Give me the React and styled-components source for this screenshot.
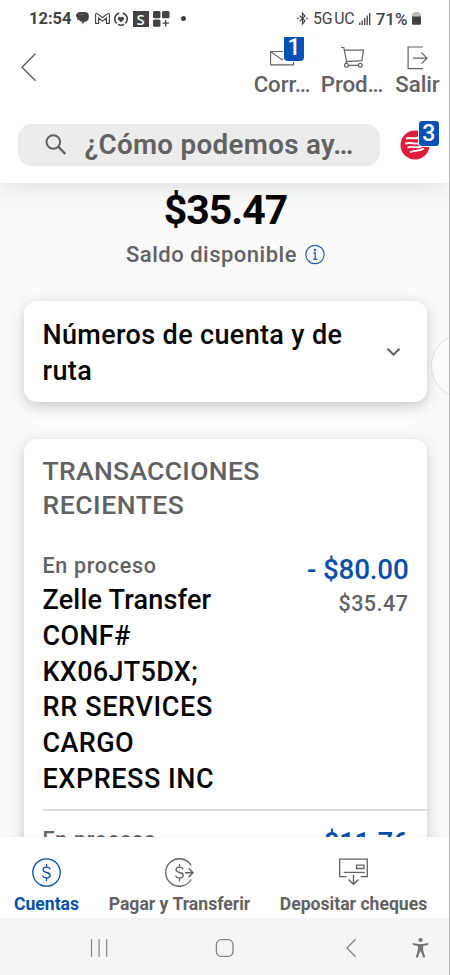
import React from "react";
import styled, { createGlobalStyle } from "styled-components";

const GlobalStyle = createGlobalStyle`
  * { box-sizing: border-box; }
  body { margin: 0; background: #fff; font-family: Roboto, "Open Sans", sans-serif; }
  svg { display: block; overflow: visible; flex: none; }
`;

const BLUE = "#0a4fa8";
const GREY = "#626262";

const Phone = styled.div`
  position: relative;
  width: 450px;
  height: 975px;
  overflow: hidden;
  display: flex;
  flex-direction: column;
  background: #fafafa;
  border-right: 1px solid #b4b4b4;
`;

const Text = styled.span`
  display: block;
  white-space: nowrap;
  font-size: ${(p) => p.$size}px;
  line-height: ${(p) => p.$line}px;
  font-weight: ${(p) => p.$weight || 500};
  letter-spacing: ${(p) => p.$track || 0}px;
  color: ${(p) => p.$color || "#050505"};
`;

const Header = styled.header`
  position: relative;
  z-index: 1;
  flex: none;
  height: 183px;
  background: #fff;
  box-shadow: 0 2px 26px rgba(0, 0, 0, 0.13);
`;

const StatusBar = styled.div`
  height: 37px;
  padding: 0 28px 0 29px;
  display: flex;
  align-items: center;
  justify-content: space-between;
`;

const StatusGroup = styled.div`
  display: flex;
  align-items: center;
  gap: ${(p) => p.$gap}px;
`;

const ActionBar = styled.div`
  height: 63px;
  display: flex;
  justify-content: space-between;
`;

const BackButton = styled.button`
  border: 0;
  background: none;
  padding: 16px 0 0 21px;
  align-self: flex-start;
`;

const Actions = styled.div`
  display: grid;
  grid-template-columns: 70px 70px 61px;
  padding-right: 1px;
`;

const Action = styled.div`
  display: flex;
  flex-direction: column;
  align-items: center;
`;

const ActionIcon = styled.div`
  position: relative;
  height: 35px;
  padding-top: 9px;
`;

const Badge = styled.span`
  position: absolute;
  left: ${(p) => p.$left}px;
  top: ${(p) => p.$top}px;
  width: ${(p) => p.$width}px;
  height: ${(p) => p.$height}px;
  border-radius: ${(p) => p.$radius};
  background: #0551b5;
  color: #fff;
  font-size: 23px;
  font-weight: 500;
  line-height: ${(p) => p.$line}px;
  text-align: center;
  box-shadow: 0 0 0 1px #fff;
`;

const SearchRow = styled.div`
  display: flex;
  align-items: center;
  padding: 23.5px 0 0 18px;
`;

const SearchField = styled.div`
  width: 362px;
  height: 42px;
  border-radius: 14px;
  background: #ececec;
  display: flex;
  align-items: center;
  padding-left: 27px;
  gap: 17.5px;
`;

const Assistant = styled.div`
  position: relative;
  margin-left: 20px;
`;

const Content = styled.main`
  flex: 1;
  min-height: 0;
  overflow: hidden;
  padding: 7px 22px 0 24px;
  display: flex;
  flex-direction: column;
`;

const Balance = styled.div`
  display: flex;
  flex-direction: column;
  align-items: center;
  gap: 10px;
  height: 111px;
  flex: none;
`;

const BalanceCaption = styled.div`
  display: flex;
  align-items: center;
  gap: 8px;
`;

const Card = styled.section`
  flex: none;
  border-radius: 13px;
  background: #fff;
  padding: 15px 0 0 18.5px;
  box-shadow: 0 4px 14px rgba(0, 0, 0, 0.2);
`;

const AccountCard = styled(Card)`
  height: 101px;
  display: flex;
  justify-content: space-between;
  padding-top: 17px;
  padding-right: 26px;
  margin-bottom: 37px;
`;

const ChevronSlot = styled.div`
  padding-top: 29px;
`;

const TransactionsCard = styled(Card)`
  height: 460px;
`;

const Transaction = styled.div`
  display: flex;
  justify-content: space-between;
  margin-top: ${(p) => p.$top}px;
  height: ${(p) => p.$height}px;
  padding-right: 18.5px;
`;

const Details = styled.div`
  display: flex;
  flex-direction: column;
  gap: 3px;
`;

const Amounts = styled.div`
  display: flex;
  flex-direction: column;
  align-items: flex-end;
  gap: 3px;
  padding-top: ${(p) => p.$top || 0}px;
`;

const Divider = styled.hr`
  margin: 0;
  border: 0;
  height: 2px;
  background: #dedede;
`;

const FloatingHandle = styled.div`
  position: absolute;
  left: 431px;
  top: 333px;
  width: 66px;
  height: 66px;
  border: 1px solid #dfdfdf;
  border-radius: 50%;
  background: #fbfbfb;
`;

const TabBar = styled.nav`
  position: relative;
  flex: none;
  height: 81px;
  background: #fff;
  display: grid;
  grid-template-columns: 93px 173px 175px;
  box-shadow: 0 0 8px rgba(0, 0, 0, 0.04);
`;

const Tab = styled.div`
  display: flex;
  flex-direction: column;
  align-items: center;
  padding-top: 21px;
`;

const TabIcon = styled.div`
  height: 36px;
`;

const SystemBar = styled.div`
  position: relative;
  flex: none;
  height: 57px;
  background: #f4f4f6;
  display: grid;
  grid-template-columns: 126px 126px 126px 13px;
  padding: 2px 0 0 36px;
  align-items: center;
  justify-items: center;
`;

const S = "#424242";

const MessageIcon = () => (
  <svg width="14" height="13" viewBox="0 0 14 13">
    <path d="M4.500 0h4.300c2.700 0 4 1.500 4 3.700v2.100c0 2.400-1.700 3.900-4.200 3.900L6.300 12.600V9.700C4.400 9.500 3.300 8.600 3 7.400L1.200 8.200l.3-2.100C.5 5.400 0 4.600 0 3.600 0 1.500 1.800 0 4.500 0z" fill={S} />
    <path d="M1.800 2.700h6.500" stroke="#777" strokeWidth=".6" />
  </svg>
);

const MailIcon = () => (
  <svg width="15" height="11" viewBox="0 0 15 11" fill="none" stroke={S} strokeWidth="1.100">
    <path d="M.6 10.400V1.500C.6.3 2 .3 2.700.900L7.500 4.700 12.300.9C13 .3 14.400.3 14.400 1.500v8.900h-3V5L7.500 8.100 3.600 5v5.400z" />
  </svg>
);

const HeartIcon = () => (
  <svg width="14" height="14" viewBox="0 0 14 14" fill="none" stroke={S} strokeWidth="1.500">
    <path d="M5.200 1A6.200 6.200 0 0 0 2.600 11.400M8.800 1a6.200 6.200 0 0 1 2.600 10.400M3.900 12.300a6.200 6.200 0 0 0 6.200 0" />
    <path d="M7 10.500 4.200 7.500C2.900 5.800 5.500 3.700 7 5.500 8.500 3.700 11.100 5.800 9.800 7.500z" fill={S} stroke="none" />
  </svg>
);

const AppTile = styled.span`
  width: 16px;
  height: 16px;
  background: ${S};
  color: #fff;
  font: 600 15px/16px "Open Sans", sans-serif;
  text-align: center;
`;

const WidgetsIcon = () => (
  <svg width="17" height="16" viewBox="0 0 17 16" fill={S}>
    <rect width="7.500" height="7.200" rx="1.500" />
    <rect x="9" width="7.500" height="7.200" rx="1.500" />
    <rect y="8.600" width="7.500" height="7.200" rx="1.500" />
    <path d="M12.700 9v6.400M9.500 12.200h6.400" stroke={S} strokeWidth="1.300" />
  </svg>
);

const Dot = styled.span`
  width: 5px;
  height: 5px;
  margin-left: 6px;
  border-radius: 50%;
  background: ${S};
`;

const BluetoothIcon = () => (
  <svg width="11" height="13" viewBox="0 0 11 13" fill="none" stroke={S} strokeWidth="1.200">
    <path d="M2.500 3.600 8 8.800 5.500 11.800V1.200L8 4.200 2.500 9.400" />
    <path d="M.2 6.500h1.500M9.300 6.500h1.500" strokeWidth="1.500" />
  </svg>
);

const SignalIcon = () => (
  <svg width="12" height="12" viewBox="0 0 12 12" stroke={S} strokeWidth="1.300">
    <path d="M.8 9.500V12M3.200 7.500V12M5.700 5V12M8.200 2.500V12M10.700 0V12" />
  </svg>
);

const BatteryIcon = () => (
  <svg width="9" height="13" viewBox="0 0 9 13">
    <path d="M0 2.500C0 1.500.8 1 2 1V0h5v1c1.200 0 2 .5 2 1.500V5H0z" fill="#bdbdbd" />
    <path d="M0 4.500h9v7c0 .8-.5 1.300-1.300 1.300H1.300C.5 12.800 0 12.300 0 11.500z" fill={S} />
  </svg>
);

const BackIcon = () => (
  <svg width="15" height="28" viewBox="0 0 15 28" fill="none" stroke="#555" strokeWidth="1.300">
    <path d="M14.500.5 1 14.200 14.500 27.700" />
  </svg>
);

const EnvelopeIcon = () => (
  <svg width="24" height="19" viewBox="0 0 24 19" fill="none" stroke={GREY} strokeWidth="1.100">
    <path d="M14 5.500H.6v13.400h22.900v-3.400M.8 5.700l11.200 8 3-1.900" />
  </svg>
);

const CartIcon = () => (
  <svg width="22" height="22" viewBox="0 0 22 22" fill="none" stroke={GREY} strokeWidth="1.200">
    <path d="M0 1.500h2.800L5.600 15.500l15.300-.9L22.500 4.200H3.400M5.600 15.500l-.9 1.800M7.500 19.300h9.800" />
    <circle cx="5.500" cy="19.300" r="1.900" />
    <circle cx="19.300" cy="19.300" r="1.900" />
  </svg>
);

const ExitIcon = () => (
  <svg width="20" height="23" viewBox="0 0 20 23" fill="none" stroke={GREY} strokeWidth="1.200">
    <path d="M15 1H.1v21.700H15M5 12.200h14M13.500 6.700l5.500 5.500-5.500 5.500" />
  </svg>
);

const SearchIcon = () => (
  <svg width="22" height="22" viewBox="0 0 22 22" fill="none" stroke={GREY} strokeWidth="2">
    <circle cx="8.300" cy="8" r="6.800" />
    <path d="m13.200 12.700 7.200 7.300" strokeWidth="2.400" />
  </svg>
);

const AssistantIcon = () => (
  <svg width="30" height="30" viewBox="0 0 30 30" fill="none">
    <circle cx="15" cy="15" r="14.500" fill="#dc1d3c" />
    <g stroke="#fff" strokeWidth="1.900">
      <path d="M6 8.700C10 6.800 13 9.700 19 7.500" />
      <path d="M5.300 13.700C10 11.500 14 15 20.500 13.200" />
      <path d="M7.500 17.600C12 15.600 16 18.500 21.500 16.800" />
      <path d="M10 22.300C14 20 18 22 24 18.500" />
    </g>
  </svg>
);

const InfoIcon = () => (
  <svg width="20" height="20" viewBox="0 0 20 20" fill="none" stroke="#2c64a8">
    <circle cx="10" cy="9.500" r="9.200" strokeWidth="1.200" />
    <path d="M8.300 8h1.900v6.200M8.200 14.300h4" strokeWidth="1.400" />
    <circle cx="9.900" cy="5" r="1.200" fill="#2c64a8" stroke="none" />
  </svg>
);

const ChevronIcon = () => (
  <svg width="14" height="9" viewBox="0 0 14 9" fill="none" stroke="#5e5e5e" strokeWidth="2">
    <path d="m.5 1.700 6 5.900 6-5.900" />
  </svg>
);

const DollarPath = () => (
  <path d="M18.100 11.200C17.600 9.500 16 9.100 14.500 9.100c-2 0-3.500 1-3.500 2.700 0 3.700 7.200 1.700 7.200 5.500 0 1.700-1.600 2.700-3.700 2.700-2 0-3.500-.8-3.800-2.500M14.500 6v3.100M14.500 20v3.200" />
);

const AccountsIcon = () => (
  <svg width="29" height="29" viewBox="0 0 29 29" fill="none" stroke={BLUE} strokeWidth="1.300">
    <circle cx="14.500" cy="14.500" r="13.700" />
    <DollarPath />
  </svg>
);

const TransferIcon = () => (
  <svg width="29" height="29" viewBox="0 0 29 29" fill="none" stroke={GREY} strokeWidth="1.300">
    <path d="M26.200 7.500A13.700 13.700 0 1 0 26.200 21.500" />
    <DollarPath />
    <path d="M20 14.700h7.800M23.700 10.200l4.300 4.500-4.300 4.500" strokeWidth="1.500" />
  </svg>
);

const DepositIcon = () => (
  <svg width="29" height="29" viewBox="0 0 29 29" fill="none" stroke={GREY} strokeWidth="1.300">
    <path d="M7.500 18.700H.7V1.200h27.600v17.500h-6.600" />
    <path d="M4.800 14.400h21" />
    <path d="M17.500 7.200h7.500v3.300h-7.500z" />
    <path d="M14.500 17v9M9.500 21.500l5 4.800 5-4.800" strokeWidth="1.400" />
  </svg>
);

const RecentsIcon = () => (
  <svg width="17" height="18" viewBox="0 0 17 18" stroke="#858587" strokeWidth="1.200">
    <path d="M.5 0v18M8.100 0v18M15.700 0v18" />
  </svg>
);

const HomeIcon = () => (
  <svg width="18" height="18" viewBox="0 0 18 18" fill="none" stroke="#858587" strokeWidth="1.300">
    <rect x=".4" y=".7" width="16.600" height="16.600" rx="4.800" />
  </svg>
);

const SystemBackIcon = () => (
  <svg width="10" height="18" viewBox="0 0 10 18" fill="none" stroke="#858587" strokeWidth="1.300">
    <path d="M9.700.3.900 9l8.800 8.700" />
  </svg>
);

const AccessibilityIcon = () => (
  <svg width="16" height="20" viewBox="0 0 16 20" fill="#757577">
    <circle cx="7.500" cy="2" r="2.100" />
    <path d="M-.2 5.100 5 6h5l5.200-.9v1.800L10.200 8v4.300l2 7-1.900.5L7.900 13.600h-.8L4.700 19.800l-1.900-.5 2-7V8L-.2 6.900z" />
  </svg>
);

const actions = [
  { label: "Corr…", Icon: EnvelopeIcon, badge: "1" },
  { label: "Prod…", Icon: CartIcon },
  { label: "Salir", Icon: ExitIcon },
];

const details = [
  ["Zelle Transfer", 0.2],
  ["CONF#", 0.3],
  ["KX06JT5DX;", 0.3],
  ["RR SERVICES", 0.65],
  ["CARGO", 0.4],
  ["EXPRESS INC", 0.55],
];

const tabs = [
  { label: "Cuentas", Icon: AccountsIcon, color: BLUE },
  { label: "Pagar y Transferir", Icon: TransferIcon, color: GREY },
  { label: "Depositar cheques", Icon: DepositIcon, color: GREY },
];

export default function App() {
  return (
    <Phone>
      <GlobalStyle />
      <Header>
        <StatusBar>
          <StatusGroup $gap={4.500}>
            <Text $size={16.500} $line={20} $weight={700} $color={S}>12:54</Text>
            <MessageIcon />
            <MailIcon />
            <HeartIcon />
            <AppTile>S</AppTile>
            <WidgetsIcon />
            <Dot />
          </StatusGroup>
          <StatusGroup $gap={4.500}>
            <BluetoothIcon />
            <Text $size={15.800} $line={20} $weight={400} $color={S}>5G&#8202;UC</Text>
            <SignalIcon />
            <Text $size={17} $line={20} $weight={500} $color={S}>71%</Text>
            <BatteryIcon />
          </StatusGroup>
        </StatusBar>
        <ActionBar>
          <BackButton aria-label="Atrás"><BackIcon /></BackButton>
          <Actions>
            {actions.map(({ label, Icon, badge }) => (
              <Action key={label}>
                <ActionIcon>
                  <Icon />
                  {badge && (
                    <Badge $left={14} $top={0} $width={20} $height={23.500} $line={21} $radius="0 0 4px 4px">{badge}</Badge>
                  )}
                </ActionIcon>
                <Text $size={22.300} $line={25} $track={-0.100} $color={GREY}>{label}</Text>
              </Action>
            ))}
          </Actions>
        </ActionBar>
        <SearchRow>
          <SearchField>
            <SearchIcon />
            <Text $size={27.700} $line={44} $weight={600} $track={0.350} $color={GREY}>¿Cómo podemos ay…</Text>
          </SearchField>
          <Assistant>
            <AssistantIcon />
            <Badge $left={19} $top={-8.500} $width={19.500} $height={25} $line={26} $radius="3px">3</Badge>
          </Assistant>
        </SearchRow>
      </Header>

      <Content>
        <Balance>
          <Text $size={41} $line={40} $weight={700} $track={-1}>$35.47</Text>
          <BalanceCaption>
            <Text $size={22} $line={30} $track={0.500} $color={GREY}>Saldo disponible</Text>
            <InfoIcon />
          </BalanceCaption>
        </Balance>
        <AccountCard>
          <div>
            <Text $size={27} $line={35.800} $track={0.350}>Números de cuenta y de</Text>
            <Text $size={27} $line={35.800} $track={0.400}>ruta</Text>
          </div>
          <ChevronSlot><ChevronIcon /></ChevronSlot>
        </AccountCard>
        <TransactionsCard>
          <Text $size={26.500} $line={34} $track={0.330} $color={GREY}>TRANSACCIONES</Text>
          <Text $size={26.500} $line={34} $track={0.550} $color={GREY}>RECIENTES</Text>
          <Transaction $top={30} $height={257}>
            <Details>
              <Text $size={21.500} $line={28} $track={0.700} $color={GREY}>En proceso</Text>
              <div>
                {details.map(([line, track]) => (
                  <Text key={line} $size={27} $line={35.800} $track={track}>{line}</Text>
                ))}
              </div>
            </Details>
            <Amounts $top={1}>
              <Text $size={27.800} $line={34} $track={-0.200} $color={BLUE}>- $80.00</Text>
              <Text $size={21.500} $line={28} $track={0.500} $color={GREY}>$35.47</Text>
            </Amounts>
          </Transaction>
          <Divider />
          <Transaction $top={15} $height={80}>
            <Text $size={21.500} $line={28} $track={0.700} $color={GREY}>En proceso</Text>
            <Amounts>
              <Text $size={27} $line={34} $weight={600} $color={BLUE}>$11.76</Text>
            </Amounts>
          </Transaction>
        </TransactionsCard>
      </Content>

      <TabBar>
        {tabs.map(({ label, Icon, color }) => (
          <Tab key={label}>
            <TabIcon><Icon /></TabIcon>
            <Text $size={17.600} $line={20} $weight={700} $color={color}>{label}</Text>
          </Tab>
        ))}
      </TabBar>
      <SystemBar>
        <RecentsIcon />
        <HomeIcon />
        <SystemBackIcon />
        <AccessibilityIcon />
      </SystemBar>
      <FloatingHandle />
    </Phone>
  );
}
